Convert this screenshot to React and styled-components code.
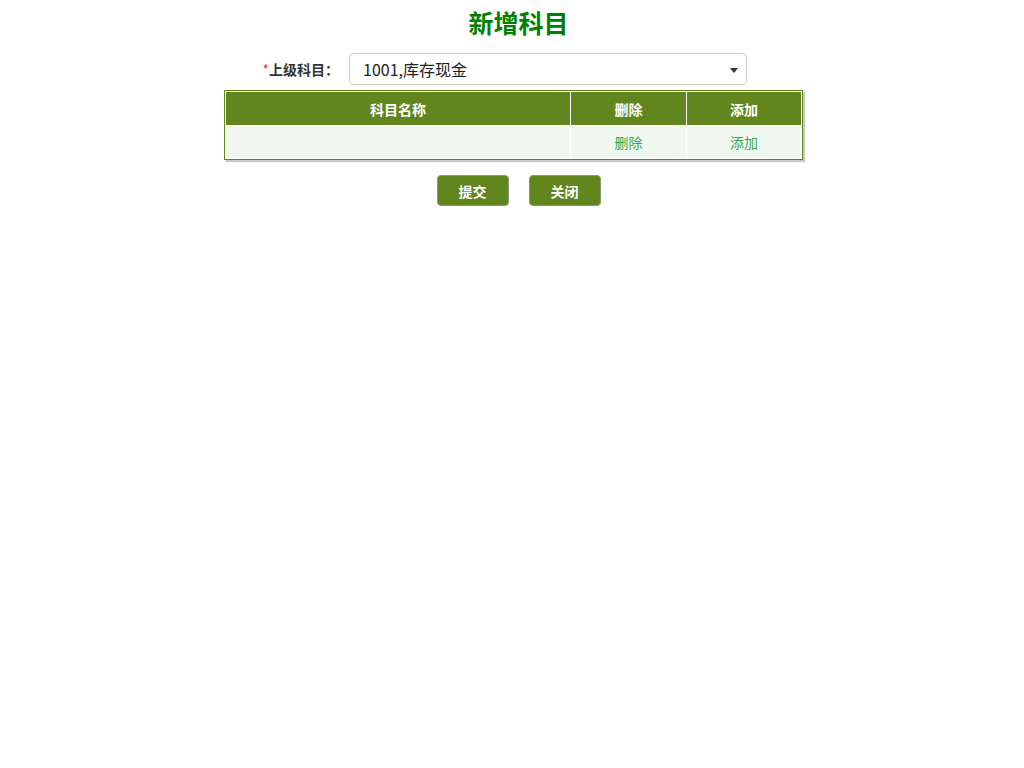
import styled, { createGlobalStyle } from "styled-components";

const GlobalStyle = createGlobalStyle`
  body {
    margin: 0;
    background: #fff;
    font-family: "Microsoft YaHei", "Noto Sans CJK SC", "Noto Sans", sans-serif;
  }
`;

const Page = styled.div`
  width: 1024px;
  padding-top: 5px;
`;

const Title = styled.h1`
  margin: 0;
  padding-left: 13px;
  text-align: center;
  font-size: 25px;
  line-height: 34px;
  font-weight: bold;
  color: #008000;
`;

const FormRow = styled.div`
  width: 579px;
  margin: 14px 0 0 224px;
  display: flex;
  align-items: center;
`;

const Label = styled.label`
  width: 115px;
  padding-right: 10px;
  text-align: right;
  font-size: 14px;
  font-weight: bold;
  color: #333;
  span {
    color: #e4393c;
    font-weight: normal;
  }
`;

const Select = styled.div`
  position: relative;
  box-sizing: border-box;
  width: 398px;
  height: 32px;
  border: 1px solid #ccc;
  border-radius: 4px;
  padding-left: 13px;
  display: flex;
  align-items: center;
  font-size: 16px;
  color: #222;
  &::after {
    content: "";
    position: absolute;
    right: 8px;
    top: 14px;
    border-left: 4px solid transparent;
    border-right: 4px solid transparent;
    border-top: 5px solid #333;
  }
`;

const TableWrap = styled.div`
  margin: 5px 0 0 224px;
  width: 579px;
`;

const Table = styled.table`
  width: 579px;
  border: 1px solid #62861e;
  border-spacing: 1px;
  box-shadow: 2px 2px 1px #c8c8c8;
  th,
  td {
    padding: 0;
    text-align: center;
    font-size: 14px;
  }
  th {
    height: 33px;
    background: #62861e;
    color: #fff;
    font-weight: bold;
  }
  td {
    height: 32px;
    background: #f0f8f0;
  }
`;

const LinkCell = styled.span`
  color: #33aa4a;
`;

const Buttons = styled.div`
  display: flex;
  justify-content: center;
  gap: 20px;
  padding-left: 13px;
  margin-top: 15px;
`;

const Button = styled.button`
  width: 72px;
  height: 31px;
  border: 1px solid #8a9a78;
  border-radius: 4px;
  background: #62861e;
  color: #fff;
  font-family: inherit;
  font-size: 14px;
  font-weight: bold;
  cursor: pointer;
`;

export default function App() {
  return (
    <Page>
      <GlobalStyle />
      <Title>新增科目</Title>
      <FormRow>
        <Label>
          <span>*</span>上级科目：
        </Label>
        <Select>1001,库存现金</Select>
      </FormRow>
      <TableWrap>
        <Table>
          <thead>
            <tr>
              <th style={{ width: 344 }}>科目名称</th>
              <th style={{ width: 115 }}>删除</th>
              <th>添加</th>
            </tr>
          </thead>
          <tbody>
            <tr>
              <td></td>
              <td>
                <LinkCell>删除</LinkCell>
              </td>
              <td>
                <LinkCell>添加</LinkCell>
              </td>
            </tr>
          </tbody>
        </Table>
      </TableWrap>
      <Buttons>
        <Button>提交</Button>
        <Button>关闭</Button>
      </Buttons>
    </Page>
  );
}
